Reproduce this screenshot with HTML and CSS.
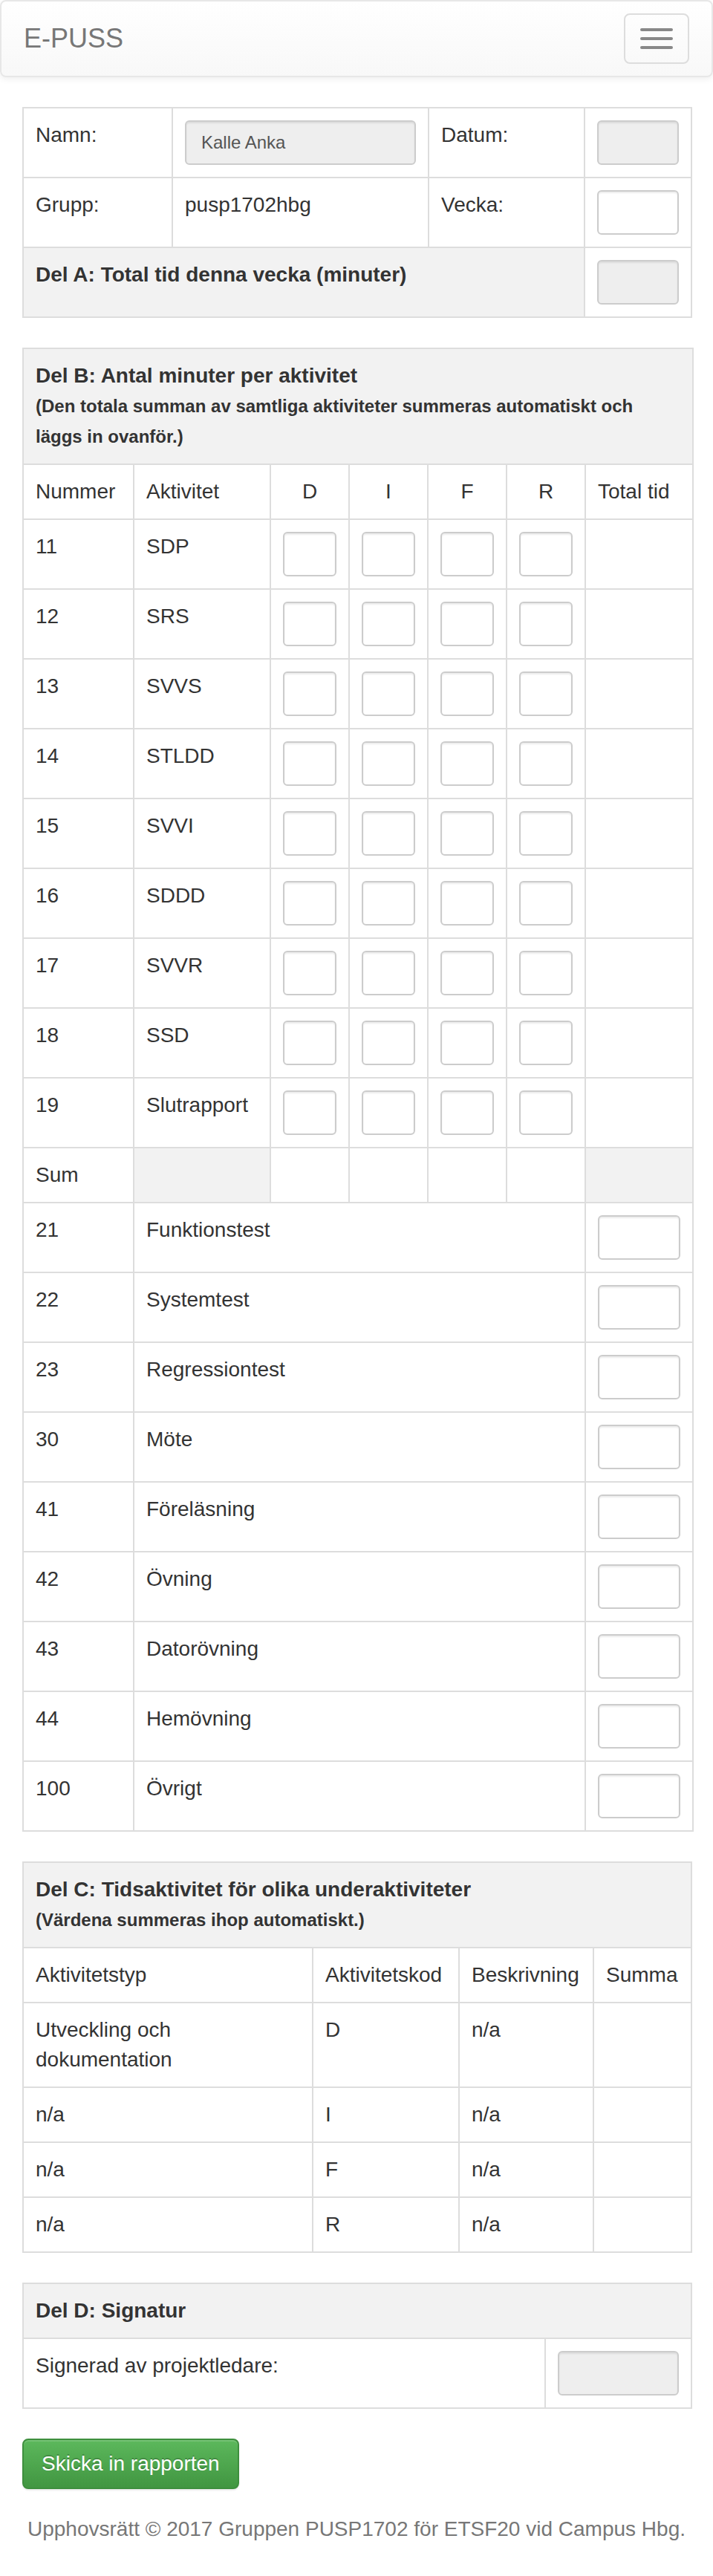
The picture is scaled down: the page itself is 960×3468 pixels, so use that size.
FILE: index.html
```html
<!DOCTYPE html>
<html lang="sv">
<head>
<meta charset="utf-8">
<title>E-PUSS</title>
<link rel="stylesheet" href="styles.css">
</head>
<body>
<nav class="navbar">
  <a class="brand" href="#">E-PUSS</a>
  <button class="toggle" type="button" aria-label="Meny">
    <span class="bar"></span><span class="bar"></span><span class="bar"></span>
  </button>
</nav>

<main class="container">
  <table class="tbl">
    <colgroup><col class="a1"><col class="a2"><col class="a3"><col class="a4"></colgroup>
    <tr>
      <td>Namn:</td>
      <td><input class="fc" type="text" value="Kalle Anka" readonly></td>
      <td>Datum:</td>
      <td><input class="fc" type="text" readonly></td>
    </tr>
    <tr>
      <td>Grupp:</td>
      <td>pusp1702hbg</td>
      <td>Vecka:</td>
      <td><input class="fc fc-white" type="text"></td>
    </tr>
    <tr>
      <th class="gray" colspan="3">Del A: Total tid denna vecka (minuter)</th>
      <td><input class="fc" type="text" readonly></td>
    </tr>
  </table>

  <table class="tbl">
    <colgroup><col class="b1"><col class="b2"><col class="b3"><col class="b3"><col class="b3"><col class="b3"><col class="b7"></colgroup>
    <tr>
      <th class="gray" colspan="7">Del B: Antal minuter per aktivitet<br><small>(Den totala summan av samtliga aktiviteter summeras automatiskt och läggs in ovanför.)</small></th>
    </tr>
    <tr>
      <td>Nummer</td><td>Aktivitet</td><td class="c">D</td><td class="c">I</td><td class="c">F</td><td class="c">R</td><td>Total tid</td>
    </tr>
    <tr><td>11</td><td>SDP</td><td><input class="fc fc-white"></td><td><input class="fc fc-white"></td><td><input class="fc fc-white"></td><td><input class="fc fc-white"></td><td></td></tr>
    <tr><td>12</td><td>SRS</td><td><input class="fc fc-white"></td><td><input class="fc fc-white"></td><td><input class="fc fc-white"></td><td><input class="fc fc-white"></td><td></td></tr>
    <tr><td>13</td><td>SVVS</td><td><input class="fc fc-white"></td><td><input class="fc fc-white"></td><td><input class="fc fc-white"></td><td><input class="fc fc-white"></td><td></td></tr>
    <tr><td>14</td><td>STLDD</td><td><input class="fc fc-white"></td><td><input class="fc fc-white"></td><td><input class="fc fc-white"></td><td><input class="fc fc-white"></td><td></td></tr>
    <tr><td>15</td><td>SVVI</td><td><input class="fc fc-white"></td><td><input class="fc fc-white"></td><td><input class="fc fc-white"></td><td><input class="fc fc-white"></td><td></td></tr>
    <tr><td>16</td><td>SDDD</td><td><input class="fc fc-white"></td><td><input class="fc fc-white"></td><td><input class="fc fc-white"></td><td><input class="fc fc-white"></td><td></td></tr>
    <tr><td>17</td><td>SVVR</td><td><input class="fc fc-white"></td><td><input class="fc fc-white"></td><td><input class="fc fc-white"></td><td><input class="fc fc-white"></td><td></td></tr>
    <tr><td>18</td><td>SSD</td><td><input class="fc fc-white"></td><td><input class="fc fc-white"></td><td><input class="fc fc-white"></td><td><input class="fc fc-white"></td><td></td></tr>
    <tr><td>19</td><td>Slutrapport</td><td><input class="fc fc-white"></td><td><input class="fc fc-white"></td><td><input class="fc fc-white"></td><td><input class="fc fc-white"></td><td></td></tr>
    <tr><td>Sum</td><td class="gray"></td><td></td><td></td><td></td><td></td><td class="gray"></td></tr>
    <tr><td>21</td><td colspan="5">Funktionstest</td><td><input class="fc fc-white"></td></tr>
    <tr><td>22</td><td colspan="5">Systemtest</td><td><input class="fc fc-white"></td></tr>
    <tr><td>23</td><td colspan="5">Regressiontest</td><td><input class="fc fc-white"></td></tr>
    <tr><td>30</td><td colspan="5">Möte</td><td><input class="fc fc-white"></td></tr>
    <tr><td>41</td><td colspan="5">Föreläsning</td><td><input class="fc fc-white"></td></tr>
    <tr><td>42</td><td colspan="5">Övning</td><td><input class="fc fc-white"></td></tr>
    <tr><td>43</td><td colspan="5">Datorövning</td><td><input class="fc fc-white"></td></tr>
    <tr><td>44</td><td colspan="5">Hemövning</td><td><input class="fc fc-white"></td></tr>
    <tr><td>100</td><td colspan="5">Övrigt</td><td><input class="fc fc-white"></td></tr>
  </table>

  <table class="tbl">
    <colgroup><col class="c1"><col class="c2"><col class="c3"><col class="c4"></colgroup>
    <tr>
      <th class="gray" colspan="4">Del C: Tidsaktivitet för olika underaktiviteter<br><small>(Värdena summeras ihop automatiskt.)</small></th>
    </tr>
    <tr><td>Aktivitetstyp</td><td>Aktivitetskod</td><td>Beskrivning</td><td>Summa</td></tr>
    <tr><td>Utveckling och dokumentation</td><td>D</td><td>n/a</td><td></td></tr>
    <tr><td>n/a</td><td>I</td><td>n/a</td><td></td></tr>
    <tr><td>n/a</td><td>F</td><td>n/a</td><td></td></tr>
    <tr><td>n/a</td><td>R</td><td>n/a</td><td></td></tr>
  </table>

  <table class="tbl">
    <colgroup><col class="d1"><col class="d2"></colgroup>
    <tr><th class="gray" colspan="2">Del D: Signatur</th></tr>
    <tr>
      <td>Signerad av projektledare:</td>
      <td><input class="fc" type="text" readonly></td>
    </tr>
  </table>

  <button class="btn-success" type="submit">Skicka in rapporten</button>

  <footer class="footer">
    <p>Upphovsrätt © 2017 Gruppen PUSP1702 för ETSF20 vid Campus Hbg.</p>
  </footer>
</main>
</body>
</html>
```

FILE: styles.css
```css
* {
  box-sizing: border-box;
}

html, body {
  margin: 0;
  padding: 0;
  background: #fff;
}

body {
  font-family: "Liberation Sans", Arial, sans-serif;
  font-size: 28px;
  line-height: 40px;
  color: #333;
}

.navbar {
  display: flex;
  justify-content: space-between;
  align-items: center;
  height: 104px;
  margin-bottom: 40px;
  border: 2px solid #e7e7e7;
  border-radius: 8px;
  background-image: linear-gradient(to bottom, #ffffff 0%, #f8f8f8 100%);
  box-shadow: inset 0 2px 0 rgba(255, 255, 255, 0.15), 0 2px 10px rgba(0, 0, 0, 0.075);
}

.brand {
  display: block;
  height: 100px;
  padding: 30px;
  font-size: 36px;
  line-height: 40px;
  color: #777;
  text-decoration: none;
}

.toggle {
  display: flex;
  flex-direction: column;
  gap: 8px;
  width: 88px;
  height: 68px;
  margin-right: 30px;
  padding: 18px 20px;
  border: 2px solid #ddd;
  border-radius: 8px;
  background: transparent;
}

.bar {
  display: block;
  width: 44px;
  height: 4px;
  border-radius: 2px;
  background: #888;
}

.container {
  padding: 0 30px;
}

.tbl {
  width: 100%;
  table-layout: fixed;
  border-collapse: collapse;
  border: 2px solid #ddd;
  margin: 0 0 40px;
}

.tbl td,
.tbl th {
  border: 2px solid #ddd;
  padding: 16px;
  vertical-align: top;
  text-align: left;
  font-weight: normal;
}

.tbl th {
  font-weight: bold;
}

.tbl .c {
  text-align: center;
}

.tbl small {
  font-size: 24px;
}

.gray {
  background: #f2f2f2;
}

.a1 { width: 201px; }
.a2 { width: 345px; }
.a3 { width: 210px; }
.a4 { width: 144px; }

.b1 { width: 149px; }
.b2 { width: 184px; }
.b3 { width: 106px; }
.b7 { width: 145px; }

.c1 { width: 390px; }
.c2 { width: 197px; }
.c3 { width: 181px; }
.c4 { width: 132px; }

.d1 { width: 703px; }
.d2 { width: 197px; }

.fc {
  display: block;
  width: 100%;
  height: 60px;
  margin: 0;
  padding: 10px 20px;
  font-family: "Liberation Sans", Arial, sans-serif;
  font-size: 24px;
  line-height: 36px;
  color: #555;
  background: #eee;
  border: 2px solid #ccc;
  border-radius: 6px;
  box-shadow: inset 0 2px 2px rgba(0, 0, 0, 0.075);
  outline: none;
}

.fc-white {
  background: #fff;
}

.btn-success {
  display: inline-block;
  margin: 0;
  padding: 12px 24px;
  font-family: "Liberation Sans", Arial, sans-serif;
  font-size: 28px;
  line-height: 40px;
  color: #fff;
  border: 2px solid #3e8f3e;
  border-radius: 8px;
  background-image: linear-gradient(to bottom, #5cb85c 0%, #419641 100%);
  text-shadow: 0 -2px 0 rgba(0, 0, 0, 0.2);
  box-shadow: inset 0 2px 0 rgba(255, 255, 255, 0.15), 0 2px 2px rgba(0, 0, 0, 0.075);
  vertical-align: top;
}

.footer p {
  margin: 34px 0 0;
  text-align: center;
  color: #777;
}
```
